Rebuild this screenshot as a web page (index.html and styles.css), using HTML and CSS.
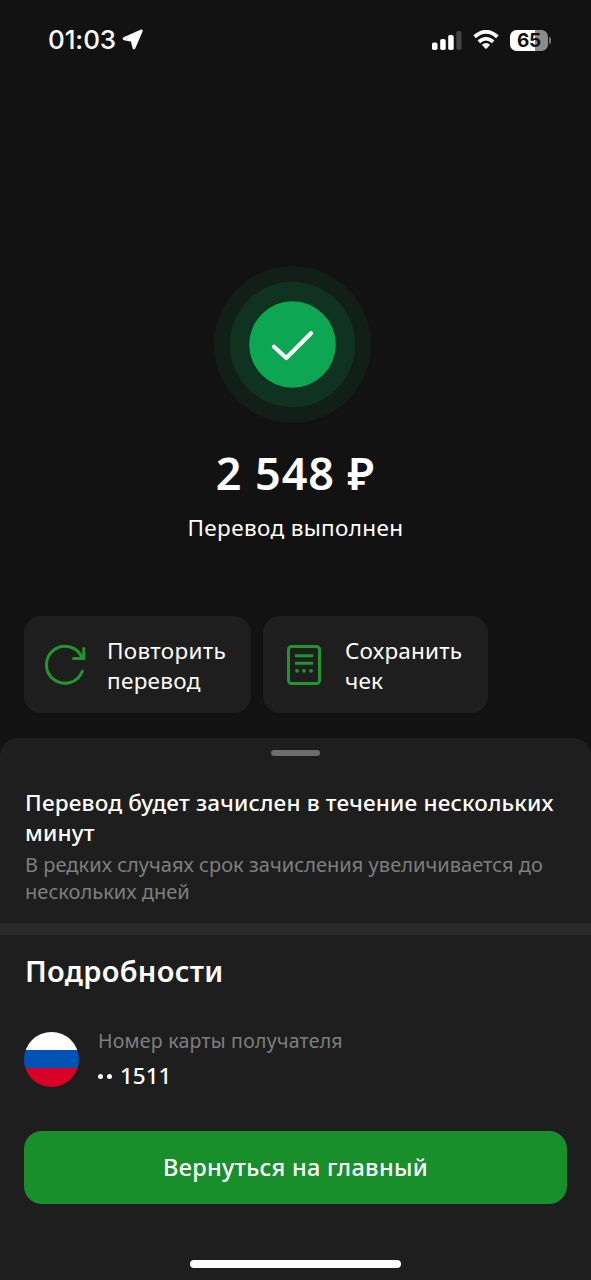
FILE: index.html
```html
<!DOCTYPE html>
<html lang="ru">
<head>
<meta charset="utf-8">
<meta name="viewport" content="width=device-width">
<title>Перевод выполнен</title>
<link rel="stylesheet" href="styles.css">
</head>
<body>
<div class="screen">
  <header class="status">
    <div class="status-left">
      <span class="time">01:03</span>
      <svg class="location" width="22" height="22" viewBox="0 0 22 22"><path d="M19.200 2 2.200 9.700 10.200 11.300 12 18.700Z" fill="#fff" stroke="#fff" stroke-width="3" stroke-linejoin="round"/></svg>
    </div>
    <div class="status-right">
      <svg width="31" height="21" viewBox="0 0 31 21"><g fill="#fff"><rect x="0" y="12.500" width="5.500" height="7.500" rx="1.800"/><rect x="8.200" y="9" width="5.500" height="11" rx="1.800"/><rect x="16.200" y="5" width="5.500" height="15" rx="1.800"/></g><rect x="24.300" y="1" width="5.200" height="19" rx="1.800" fill="#444"/></svg>
      <svg class="wifi" width="26" height="20" viewBox="0 0 26 20"><g fill="none" stroke="#fff" stroke-width="3.800"><path d="M1.600 6.700Q13 -3 24.400 6.700"/><path d="M5.800 11.700Q13 5.500 20.200 11.700"/></g><path d="M8.900 14.800Q13 11.300 17.100 14.800L13.700 18.600Q13 19.400 12.300 18.600Z" fill="#fff"/></svg>
      <div class="battery"><span class="charge">65</span></div>
      <span class="battery-tip"></span>
    </div>
  </header>

  <main class="result">
    <svg class="success" width="158" height="158" viewBox="0 0 158 158"><circle cx="78.500" cy="78.500" r="78.500" fill="#121e18"/><circle cx="78.500" cy="78.500" r="62.700" fill="#103220"/><circle cx="78.500" cy="78.500" r="43.300" fill="#0da653"/><path d="M60 80.700 72.300 92 97 67.300" fill="none" stroke="#fff" stroke-width="4.200" stroke-linecap="round" stroke-linejoin="round"/></svg>
    <h1 class="amount">2 548 ₽</h1>
    <p class="caption">Перевод выполнен</p>
  </main>

  <nav class="actions">
    <button class="action repeat">
      <svg width="42" height="42" viewBox="0 0 42 42"><g fill="none" stroke="#21962f" stroke-width="3" stroke-linecap="round"><path d="M37.300 27.200A18.500 18.500 0 1 1 37.300 14.300"/><path d="M38.800 4.500V14.600H28.500"/></g><path d="M33 14.500 38.800 8.700V14.600Z" fill="#21962f"/></svg>
      <span>Повторить<br>перевод</span>
    </button>
    <button class="action save">
      <svg width="34" height="40" viewBox="0 0 34 40"><rect x="1.500" y="1.500" width="31" height="37" rx="3" fill="none" stroke="#21962f" stroke-width="3"/><path d="M8 10.700H26M8 18.300H26" stroke="#21962f" stroke-width="3"/><g fill="#21962f"><circle cx="10" cy="25.800" r="1.900"/><circle cx="17" cy="25.800" r="1.900"/><circle cx="24" cy="25.800" r="1.900"/></g></svg>
      <span>Сохранить<br>чек</span>
    </button>
  </nav>

  <section class="sheet">
    <div class="grabber"></div>
    <div class="notice">
      <p class="notice-title">Перевод будет зачислен в течение нескольких<br>минут</p>
      <p class="notice-text">В редких случаях срок зачисления увеличивается до<br>нескольких дней</p>
    </div>
    <div class="divider"></div>
    <h2 class="details-title">Подробности</h2>
    <div class="card-row">
      <div class="flag"><i class="white"></i><i class="blue"></i><i class="red"></i></div>
      <div>
        <div class="label">Номер карты получателя</div>
        <div class="value"><i class="dot"></i><i class="dot"></i><span>1511</span></div>
      </div>
    </div>
    <button class="primary">Вернуться на главный</button>
    <div class="home"></div>
  </section>
</div>
</body>
</html>
```

FILE: styles.css
```css
* { box-sizing: border-box; margin: 0; padding: 0; }
body { background: #121212; color: #fff; font-family: "Noto Sans", "Open Sans", sans-serif; }
button { border: 0; color: inherit; font: inherit; text-align: left; }
svg { display: block; flex: none; }
.screen { width: 591px; height: 1280px; overflow: hidden; display: flex; flex-direction: column; }

.status { height: 80px; padding: 0 40px 0 48px; display: flex; justify-content: space-between; align-items: center; }
.status-left, .status-right { display: flex; align-items: center; }
.time { font: 500 26px/30px Inter, sans-serif; letter-spacing: -0.1px; }
.location { margin-left: 6px; }
.wifi { margin-left: 10px; }
.battery { width: 38px; height: 21px; margin-left: 11px; border-radius: 6.5px; background: linear-gradient(90deg, #fff 65%, #8b8b8b 65%); display: flex; justify-content: center; align-items: center; }
.charge { color: #121212; font: 700 19px/21px Inter, sans-serif; letter-spacing: -0.3px; }
.battery-tip { width: 2px; height: 7px; margin-left: 1px; border-radius: 0 2px 2px 0; background: #777; }

.result { height: 536px; padding-top: 186px; display: flex; flex-direction: column; align-items: center; }
.success { margin-right: 6px; }
.amount { margin-top: 19px; font-size: 45px; line-height: 60px; font-weight: 600; letter-spacing: 0.9px; }
.caption { margin-top: 9px; font-size: 22.500px; line-height: 32px; letter-spacing: 0.35px; }

.actions { height: 122px; padding-left: 24px; display: flex; align-items: flex-start; gap: 12px; }
.action { height: 97px; border-radius: 17px; background: #1e1e1e; display: flex; align-items: center; font-size: 22.500px; line-height: 30px; }
.action span { padding-top: 2px; }
.repeat { width: 227px; padding-left: 21px; gap: 20px; letter-spacing: 0.3px; }
.save { width: 225px; padding-left: 24px; gap: 24px; letter-spacing: 0.2px; }

.sheet { flex: 1; border-radius: 18px 18px 0 0; background: #1e1e1e; }
.grabber { width: 49px; height: 6px; border-radius: 3px; background: #6c6c6c; margin: 0 auto; transform: translateY(12px); }
.notice { height: 179px; padding: 44px 0 0 25px; white-space: nowrap; }
.notice-title { font-size: 22.500px; line-height: 30px; font-weight: 500; letter-spacing: 0.19px; }
.notice-text { margin-top: 3px; color: #7f7f7f; font-size: 20px; line-height: 27px; letter-spacing: 0.04px; }
.divider { height: 12px; background: #292929; }
.details-title { padding: 18px 0 0 25px; font-size: 29px; line-height: 36px; font-weight: 600; letter-spacing: 0.3px; }
.card-row { height: 142px; padding: 39px 24px 0; display: flex; gap: 19px; white-space: nowrap; }
.flag { width: 55px; height: 55px; margin-top: 4px; border-radius: 50%; overflow: hidden; display: grid; grid-template-rows: 18px 18px 19px; }
.white { background: #fff; }
.blue { background: #0052b4; }
.red { background: #d80027; }
.label { color: #7f7f7f; font-size: 19.500px; line-height: 26px; letter-spacing: 0.25px; }
.value { margin-top: 7px; display: flex; align-items: center; font-size: 22.500px; line-height: 30px; font-weight: 500; }
.dot { width: 5px; height: 5px; margin: 0 4px 0 0; border-radius: 50%; background: #fff; }
.dot + span { margin-left: 4px; }
.primary { width: 543px; height: 73px; margin: 0 auto; border-radius: 18px; background: #188f2b; display: block; text-align: center; font-size: 23.500px; line-height: 71px; font-weight: 500; letter-spacing: 0.3px; }
.home { width: 211px; height: 8px; margin: 56px auto 0; border-radius: 4px; background: #fff; }
```
